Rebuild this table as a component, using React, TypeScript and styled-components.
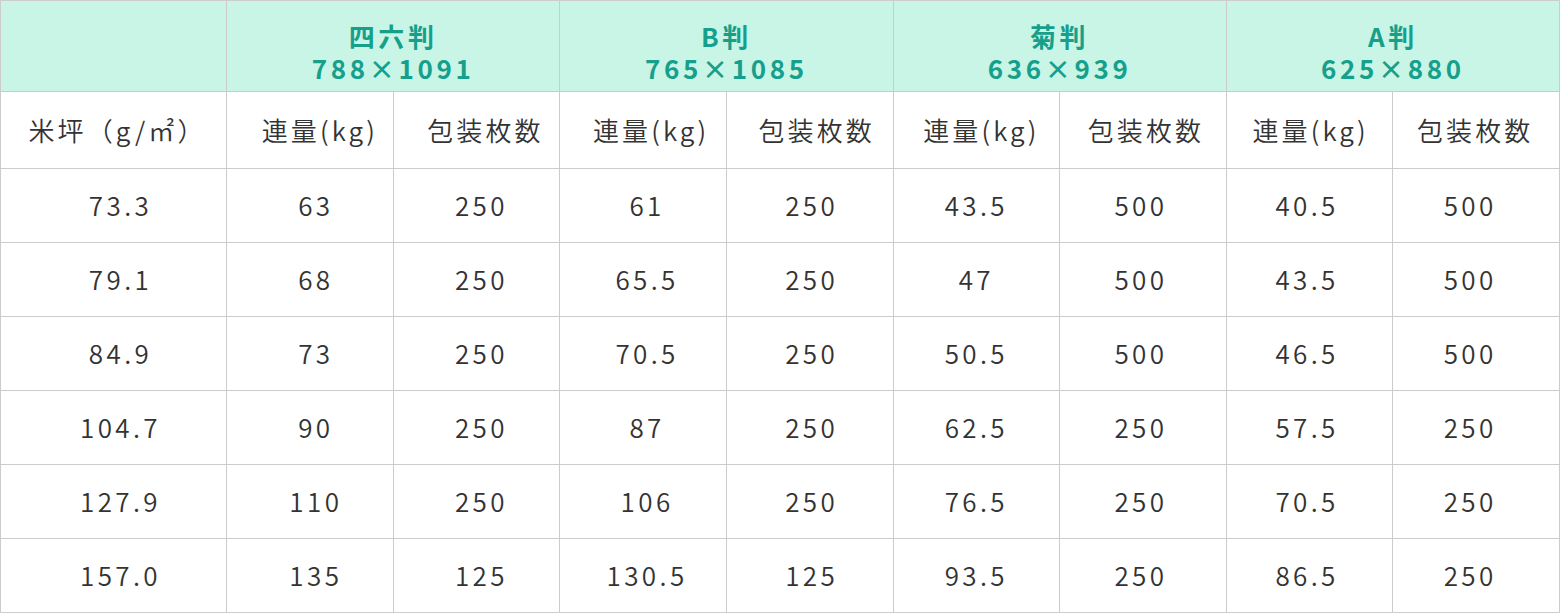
import React from 'react';
import styled, { createGlobalStyle, css } from 'styled-components';

const GlobalStyle = createGlobalStyle`
  html, body {
    margin: 0;
    padding: 0;
    background: #fff;
  }
  body {
    font-family: 'Noto Sans CJK JP', 'Noto Sans', sans-serif;
    color: #333;
  }
`;

interface ISize {
  name: string;
  dims: string;
}

interface IShift {
  shift?: number;
}

const sizes: ISize[] = [
  { name: '四六判', dims: '788×1091' },
  { name: 'B判', dims: '765×1085' },
  { name: '菊判', dims: '636×939' },
  { name: 'A判', dims: '625×880' },
];

const rows: string[][] = [
  ['73.3', '63', '250', '61', '250', '43.5', '500', '40.5', '500'],
  ['79.1', '68', '250', '65.5', '250', '47', '500', '43.5', '500'],
  ['84.9', '73', '250', '70.5', '250', '50.5', '500', '46.5', '500'],
  ['104.7', '90', '250', '87', '250', '62.5', '250', '57.5', '250'],
  ['127.9', '110', '250', '106', '250', '76.5', '250', '70.5', '250'],
  ['157.0', '135', '125', '130.5', '125', '93.5', '250', '86.5', '250'],
];

// text in the source drifts a little off each column's centre
const labelShift = [4, 10, 9, 8, 7, 5, 3, 1, -1];
const dataShift = [7, 6, 5, 4, 2, 0, -2, -2.5, -6];

const labels = ['米坪（g/㎡）', ...sizes.flatMap(() => ['連量(kg)', '包装枚数'])];

const App: React.FunctionComponent = () => {
  return (
    <>
      <GlobalStyle />
      <Table>
        <colgroup>
          <col style={{ width: 226 }} />
          {Array.from({ length: 8 }).map((_, i) => (
            <col key={i} />
          ))}
        </colgroup>
        <thead>
          <HeadRow>
            <SizeCell />
            {sizes.map(({ name, dims }) => (
              <SizeCell key={name} colSpan={2}>
                <SizeLine>{name}</SizeLine>
                <SizeLine>{dims}</SizeLine>
              </SizeCell>
            ))}
          </HeadRow>
          <SubRow>
            {labels.map((label, i) => (
              <LabelCell key={i} shift={labelShift[i]}>
                {label}
              </LabelCell>
            ))}
          </SubRow>
        </thead>
        <tbody>
          {rows.map((row, r) => (
            <DataRow key={r}>
              {row.map((value, c) => (
                <Cell key={c} shift={dataShift[c]}>
                  {value}
                </Cell>
              ))}
            </DataRow>
          ))}
        </tbody>
      </Table>
    </>
  );
};

const shifted = css<IShift>`
  ${({ shift = 0 }) => css`
    padding-left: ${Math.max(0, shift * 2)}px;
    padding-right: ${Math.max(0, -shift * 2)}px;
  `}
`;

const Table = styled.table`
  width: 1560px;
  border-collapse: collapse;
  table-layout: fixed;
  font-family: 'Noto Sans CJK JP', 'Noto Sans', sans-serif;
`;

const HeadRow = styled.tr`
  height: 91px;
`;

const SubRow = styled.tr`
  height: 77px;
`;

const DataRow = styled.tr`
  height: 74px;
`;

const SizeCell = styled.th`
  background: #c9f5e7;
  border: 1px solid #cccccc;
  color: #16a08b;
  font-weight: 700;
  font-size: 26px;
  letter-spacing: 0.14em;
  text-align: center;
  vertical-align: middle;
  padding: 12px 0 0;
`;

const SizeLine = styled.div`
  line-height: 32px;
  height: 32px;
`;

const LabelCell = styled.td<IShift>`
  border: 1px solid #cccccc;
  color: #333;
  font-size: 26px;
  font-weight: 350;
  letter-spacing: 0.12em;
  text-align: center;
  vertical-align: middle;
  white-space: nowrap;
  padding-top: 0;
  padding-bottom: 2px;
  ${shifted}
`;

const Cell = styled.td<IShift>`
  border: 1px solid #cccccc;
  color: #333;
  font-size: 26px;
  font-weight: 350;
  letter-spacing: 0.13em;
  text-align: center;
  vertical-align: middle;
  padding-top: 0;
  padding-bottom: 3px;
  ${shifted}
`;

export default App;
